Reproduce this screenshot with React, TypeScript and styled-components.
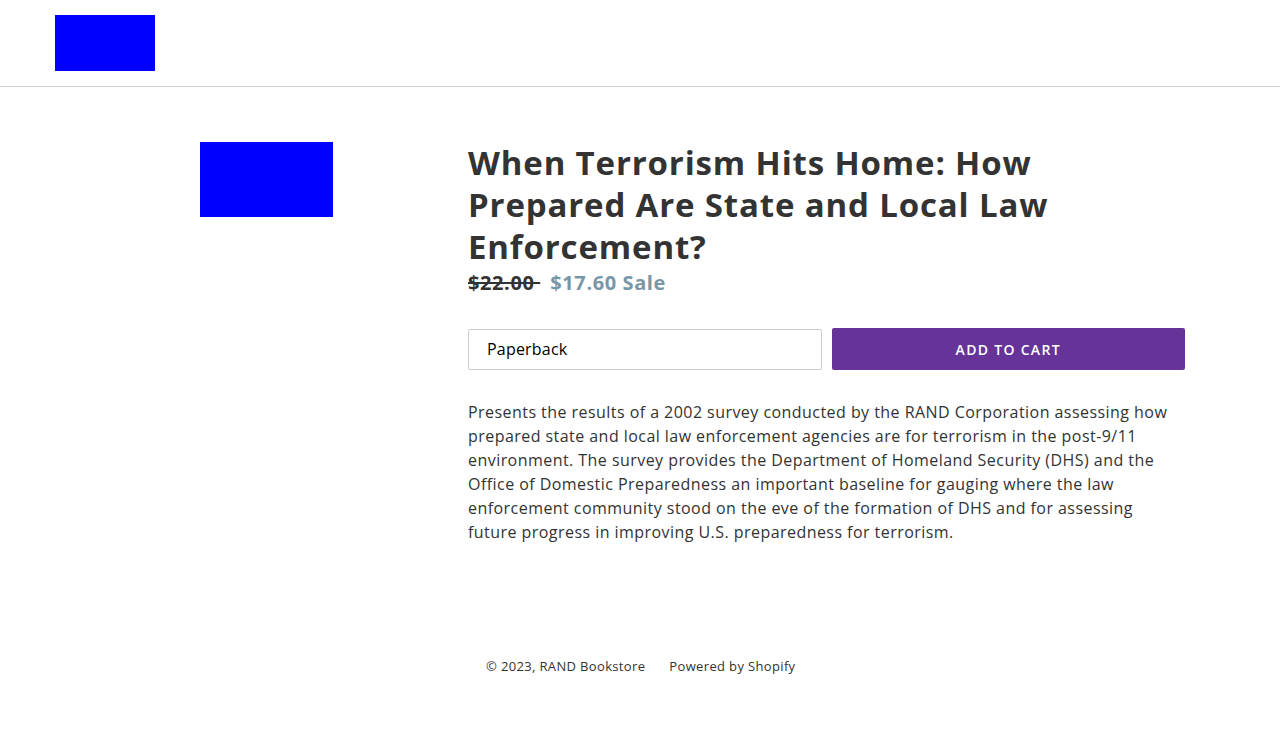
import React from "react";
import styled, { createGlobalStyle } from "styled-components";

const Global = createGlobalStyle`
  html, body { margin: 0; padding: 0; background: #fff; }
  body { font-family: "Open Sans", "Liberation Sans", sans-serif; color: #3d4246; }
  * { box-sizing: border-box; }
`;

const Header = styled.header`
  height: 87px;
  border-bottom: 1px solid #d0d0d0;
  padding: 15px 55px 0;
`;

const Logo = styled.div`
  width: 100px;
  height: 56px;
  background: #0000ff;
`;

const Main = styled.main`
  padding: 55px 95px 0;
  display: grid;
  grid-template-columns: 343px 717px;
  column-gap: 30px;
`;

const ImageCol = styled.div`
  display: flex;
  justify-content: center;
  align-items: flex-start;
`;

const ProductImage = styled.div`
  width: 133px;
  height: 75px;
  background: #0000ff;
`;

const InfoCol = styled.div`
  display: flex;
  flex-direction: column;
`;

const Title = styled.h1`
  margin: 0;
  font-family: "Open Sans", "Liberation Sans", sans-serif;
  font-weight: 700;
  font-size: 33px;
  line-height: 42px;
  color: #333;
  letter-spacing: 0.85px;
`;

const PriceRow = styled.div`
  display: flex;
  align-items: baseline;
  gap: 10px;
  margin-top: 2px;
  font-size: 20px;
  font-weight: 700;
  line-height: 26px;
  letter-spacing: 0.6px;
`;

const OldPrice = styled.s`
  color: #333;
  text-decoration-thickness: 2px;
`;

const SalePrice = styled.span`
  color: #7796a8;
`;

const FormRow = styled.div`
  display: grid;
  grid-template-columns: 1fr 1fr;
  gap: 10px;
  margin-top: 32px;
  align-items: center;
`;

const Select = styled.div`
  height: 41px;
  border: 1px solid #cccccc;
  border-radius: 2px;
  padding: 0 18px;
  display: flex;
  align-items: center;
  font-size: 16px;
  letter-spacing: 0.2px;
  color: #000;
`;

const CartButton = styled.button`
  height: 42px;
  border: none;
  border-radius: 2px;
  background: #663399;
  color: #fff;
  font-family: "Open Sans", "Liberation Sans", sans-serif;
  font-weight: 600;
  font-size: 14px;
  letter-spacing: 1.3px;
  text-transform: uppercase;
`;

const Description = styled.p`
  margin: 30px 0 0;
  font-size: 16px;
  line-height: 24px;
  letter-spacing: 0.45px;
  color: #333;
`;

const Footer = styled.footer`
  margin-top: 113px;
  padding-left: 486px;
  display: flex;
  gap: 24px;
  font-size: 13px;
  letter-spacing: 0.35px;
  color: #333;
`;

export default function App() {
  return (
    <>
      <Global />
      <Header>
        <Logo />
      </Header>
      <Main>
        <ImageCol>
          <ProductImage />
        </ImageCol>
        <InfoCol>
          <Title>
            When Terrorism Hits Home: How Prepared Are State and Local Law
            Enforcement?
          </Title>
          <PriceRow>
            <OldPrice>$22.00&nbsp;</OldPrice>
            <SalePrice>$17.60 Sale</SalePrice>
          </PriceRow>
          <FormRow>
            <Select>Paperback</Select>
            <CartButton>Add to cart</CartButton>
          </FormRow>
          <Description>
            Presents the results of a 2002 survey conducted by the RAND
            Corporation assessing how prepared state and local law enforcement
            agencies are for terrorism in the post-9/11 environment. The survey
            provides the Department of Homeland Security (DHS) and the Office of
            Domestic Preparedness an important baseline for gauging where the
            law enforcement community stood on the eve of the formation of DHS
            and for assessing future progress in improving U.S. preparedness
            for terrorism.
          </Description>
        </InfoCol>
      </Main>
      <Footer>
        <span>© 2023, RAND Bookstore</span>
        <span>Powered by Shopify</span>
      </Footer>
    </>
  );
}
